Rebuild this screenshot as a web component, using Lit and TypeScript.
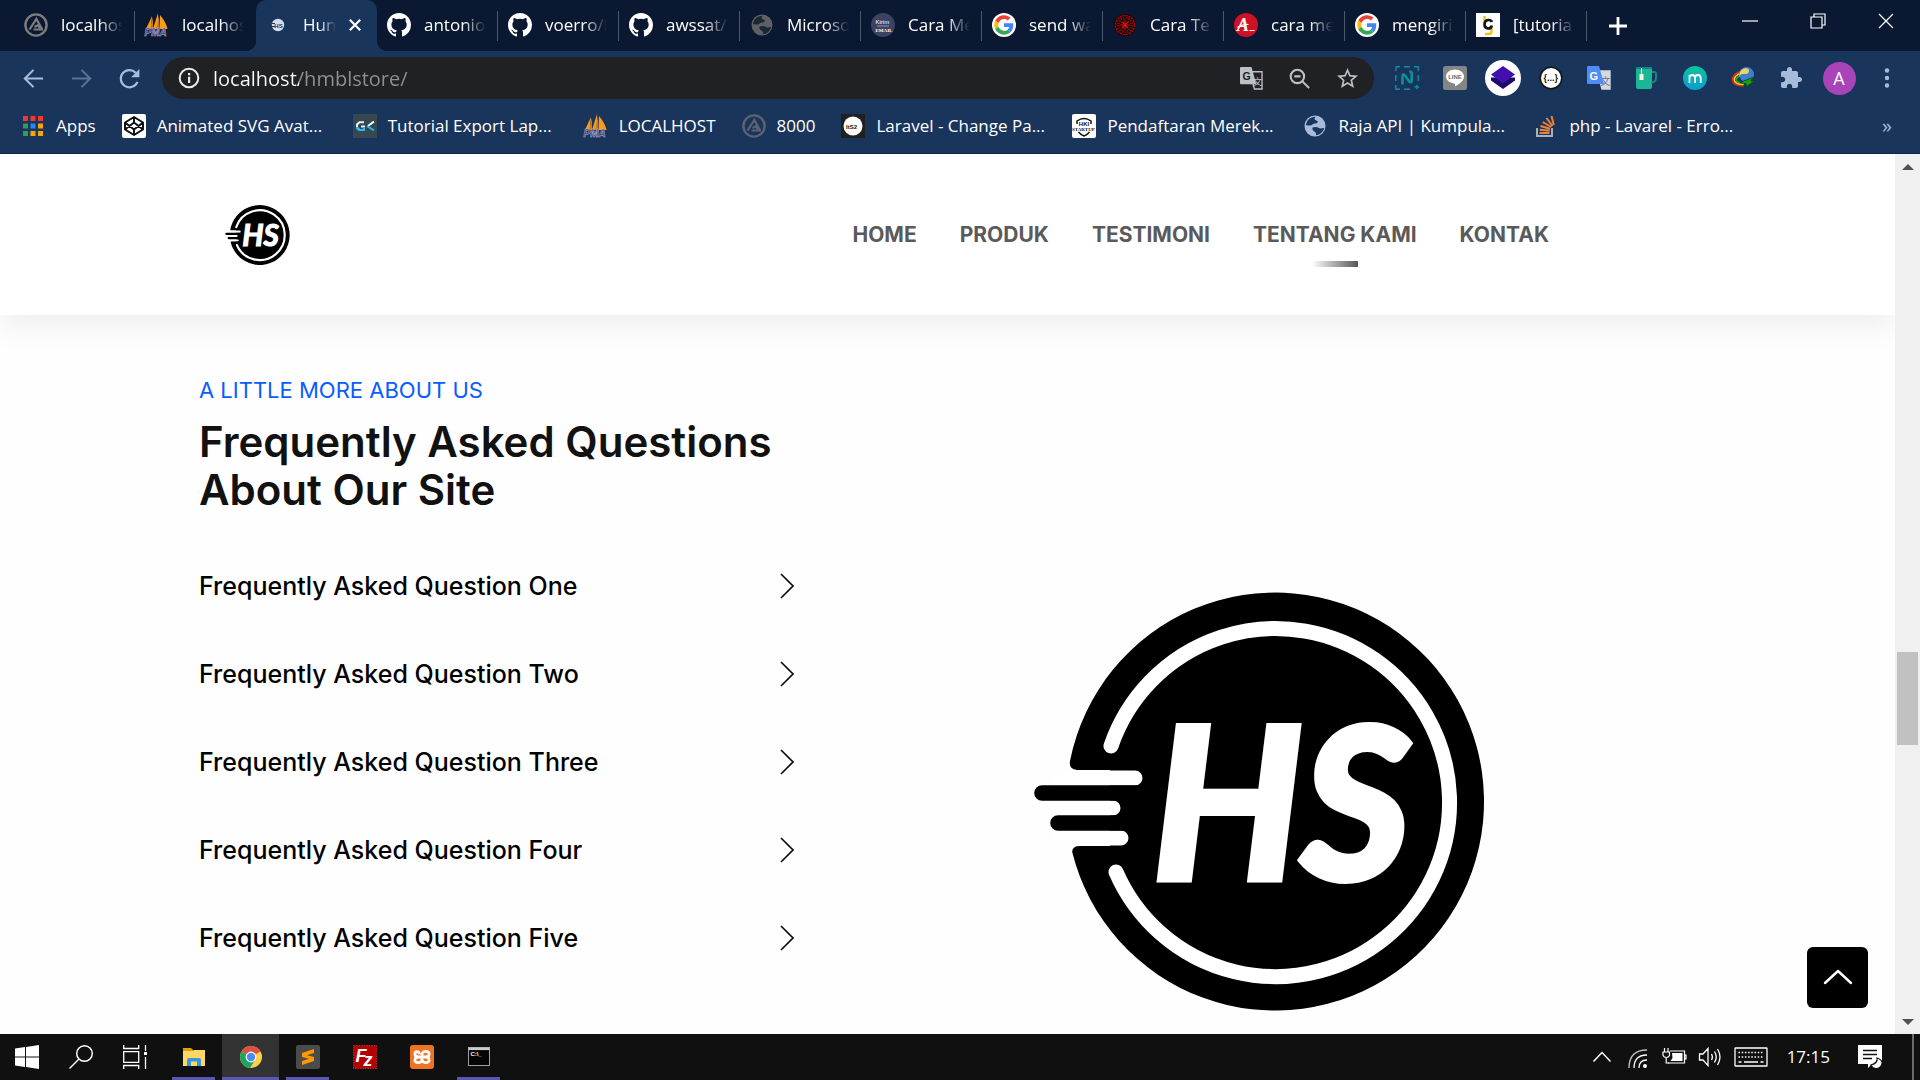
import { LitElement, html, css, svg } from "lit";
import { customElement, property, state } from "lit/decorators.js";
import { classMap } from "lit/directives/class-map.js";

/* ---------- shared drawings ---------- */

const brandLogo = () => html`<svg viewBox="34 32 451 419" role="img" aria-label="HS">
  <path d="M110 210H77Q68 209 70.2 200A209 209 0 1 1 72.2 292Q72 286 80 286H110Z" fill="#000" />
  <path d="M111 186A174 174 0 1 1 116 312" fill="none" stroke="#fff" stroke-width="15" stroke-linecap="round" />
  <g stroke-linecap="round" stroke-width="15" fill="none">
    <path d="M60 218H135M60 248H113M60 278H121" stroke="#fff" />
    <path d="M42 233H150M58 263H150" stroke="#000" stroke-width="15.6" />
  </g>
  <text x="153" y="318" class="mono">HS</text>
</svg>`;

const github = html`<svg viewBox="0 0 16 16"><path fill="#fff" d="M8 0C3.58 0 0 3.58 0 8c0 3.54 2.29 6.53 5.47 7.59.4.07.55-.17.55-.38 0-.19-.01-.82-.01-1.49-2.01.37-2.53-.49-2.69-.94-.09-.23-.48-.94-.82-1.13-.28-.15-.68-.52-.01-.53.63-.01 1.08.58 1.23.82.72 1.21 1.87.87 2.33.66.07-.52.28-.87.51-1.07-1.78-.2-3.64-.89-3.64-3.95 0-.87.31-1.59.82-2.15-.08-.2-.36-1.02.08-2.12 0 0 .67-.21 2.2.82a7.6 7.6 0 0 1 4 0c1.53-1.04 2.2-.82 2.2-.82.44 1.1.16 1.92.08 2.12.51.56.82 1.27.82 2.15 0 3.07-1.87 3.75-3.65 3.95.29.25.54.73.54 1.48 0 1.07-.01 1.93-.01 2.2 0 .21.15.46.55.38A8 8 0 0 0 16 8c0-4.42-3.58-8-8-8z"/></svg>`;

const google = html`<svg viewBox="0 0 48 48"><circle cx="24" cy="24" r="24" fill="#fff"/><g transform="translate(4.500 4.500) scale(.81)"><path fill="#EA4335" d="M24 9.5c3.54 0 6.71 1.22 9.21 3.6l6.85-6.85C35.9 2.38 30.47 0 24 0 14.62 0 6.51 5.38 2.56 13.22l7.98 6.19C12.43 13.72 17.74 9.5 24 9.5z"/><path fill="#4285F4" d="M46.98 24.55c0-1.57-.15-3.09-.38-4.55H24v9.02h12.94c-.58 2.96-2.26 5.48-4.78 7.18l7.73 6c4.51-4.18 7.09-10.36 7.09-17.65z"/><path fill="#FBBC05" d="M10.53 28.59c-.48-1.45-.76-2.99-.76-4.59s.27-3.14.76-4.59l-7.98-6.19C.92 16.46 0 20.12 0 24c0 3.88.92 7.54 2.56 10.78l7.97-6.19z"/><path fill="#34A853" d="M24 48c6.48 0 11.93-2.13 15.89-5.81l-7.73-6c-2.15 1.45-4.92 2.3-8.16 2.3-6.26 0-11.57-4.22-13.47-9.91l-7.98 6.19C6.51 42.62 14.62 48 24 48z"/></g></svg>`;

const ampps = (c: string) => html`<svg viewBox="0 0 24 24" fill="none" stroke=${c}><circle cx="12" cy="12" r="10.6" stroke-width="2.4"/><path d="M5.5 16.5L12.4 6l5.8 10.5M9.5 16.5h9.5M10.5 14l3.4-1.8 2 3" stroke-width="2.2"/></svg>`;

const pma = html`<svg viewBox="0 0 24 24"><path fill="#f89c1c" d="M1 16L7 3l-1 13zM8 16L13 0l0 16zM14.500 16L15 2q6 7 7.500 14z"/><path fill="#c9781a" d="M5 16L8 4v12zM11 16l3-14v14z"/><text x="-.5" y="23" class="pma">PMA</text></svg>`;

const globe = (c: string, land: string) => html`<svg viewBox="0 0 24 24"><circle cx="12" cy="12" r="10.500" fill=${c}/><path fill=${land} d="M12.500 2.800c-1 1.200-1.300 2.400-.3 3.200 1.300.8 2.700.6 2.500 2-.2 1.300-2 1.400-3.400 1.600-1.800.3-1.800 1.900-4.300 1.900L3 11.300c.4-4.600 4-8.300 9.500-8.500zM9.500 13.500c2.500-1 4.500-.7 6 .3 1 .8 2.200.8 3.500.4.900-.2 1.500-.1 2 .1-1 4-4.500 6.800-8.300 7 .8-1.500.4-2.500-.6-3.300-1.700-1.100-3.200-2.300-2.600-4.500z"/></svg>`;

const translate = (a: string, b: string) => html`<svg viewBox="0 0 24 24"><path d="M10 5h13v18H15z" fill=${b === "none" ? "#202124" : b} stroke=${b === "none" ? "#bdc1c6" : b} stroke-width="1.400"/><text x="13.200" y="19" class="han" fill=${b === "none" ? "#bdc1c6" : "#607890"}>文</text><path d="M1 0h11l5 18H1a1 1 0 0 1-1-1V1a1 1 0 0 1 1-1z" fill=${a}/><text x="2.500" y="13.500" class="gee" fill=${b === "none" ? "#202124" : "#fff"}>G</text></svg>`;

const icons: Record<string, unknown> = {
  ampps: ampps("#7d7d7d"),
  amppsDim: ampps("#5c6270"),
  pma,
  github,
  google,
  hs: html`<svg viewBox="0 0 24 24"><circle cx="12" cy="12" r="6.200" fill="#d7dce8"/><path d="M6 10.500h3M6 13.500h3" stroke="#1a355b"/><text x="8.300" y="14.600" class="tiny" fill="#1a355b">HS</text></svg>`,
  globeDim: globe("#5e6064", "#1b2637"),
  globe: globe("#a8bbdb", "#1a355b"),
  kirim: html`<svg viewBox="0 0 24 24"><circle cx="12" cy="12" r="12" fill="#3b4263"/><text x="4.500" y="11" class="tiny light" fill="#fff">Kirim</text><path d="M6 13h12" stroke="#aab" stroke-width=".8"/><text x="4.500" y="19" class="micro" fill="#fff">EMAIL</text></svg>`,
  redseal: html`<svg viewBox="0 0 24 24"><circle cx="12" cy="12" r="11" fill="#100608"/><g fill="none" stroke="#a5080e"><circle cx="12" cy="12" r="9.500" stroke-dasharray="2.200 .8" stroke-width="1.600"/><circle cx="12" cy="12" r="6.800" stroke-dasharray="1 1.500" stroke-width="3"/></g><path d="M12 7v10M7 12h10M8.500 8.500l7 7M15.500 8.500l-7 7" stroke="#e00a12" stroke-width="1.200"/></svg>`,
  alfa: html`<svg viewBox="0 0 24 24"><circle cx="12" cy="12" r="12" fill="#cf1126"/><text x="3" y="18" class="alfa" fill="#fff">A</text><path d="M3.500 14.500q5-3.500 11-3M15.500 17.500h5" stroke="#fff" stroke-width="1.200" fill="none"/></svg>`,
  cg: html`<svg viewBox="0 0 24 24"><path fill="#fff" d="M0 0h24v24H0z"/><path d="M8.500 3v5M15.500 15.500V19q0 2-2.500 2H9" stroke="#f2c21c" stroke-width="2.400" fill="none"/><path d="M16 9q-1-2.300-4-2-3.500.4-3.500 4.300t3.500 4.200q3.500 0 3.800-3" stroke="#141414" stroke-width="2.600" fill="none"/></svg>`,
  apps: html`<svg viewBox="0 0 24 24">${[["#f4362e", "#f4362e", "#f4362e"], ["#2f9e56", "#2b87f0", "#f2a60c"], ["#2f9e56", "#f2a60c", "#f2a60c"]].map((r, y) => r.map((c, x) => svg`<rect x=${2 + x * 7.5} y=${2 + y * 7.5} width="5" height="5" fill=${c}/>`))}</svg>`,
  codepen: html`<svg viewBox="0 0 24 24"><rect width="24" height="24" rx="2" fill="#fff"/><path d="M12 3l9 5.500v7L12 21l-9-5.500v-7zM12 3v5.500M12 21v-5.500M3 8.500l9 7 9-7M3 15.500l9-7 9 7" fill="none" stroke="#0b0b12" stroke-width="1.900" stroke-linejoin="round"/></svg>`,
  gk: html`<svg viewBox="0 0 24 24"><path fill="#36474f" d="M0 0h24v24H0z"/><path d="M11 8.300H6.500L4 10.500v3L6.500 16H11v-3.500H8" fill="none" stroke="#e8f5fb" stroke-width="2"/><path d="M4 13v1l2.500 2H11v-3" fill="none" stroke="#29b6f6" stroke-width="2"/><path d="M21 7.500l-6 4.500" stroke="#fff" stroke-width="2"/><path d="M14 12l7 4.500" stroke="#29b6f6" stroke-width="2"/></svg>`,
  its2: html`<svg viewBox="0 0 24 24"><path fill="#202020" d="M0 0h24v24H0z"/><circle cx="12" cy="12" r="9.500" fill="#fff"/><text x="5" y="14.500" class="tiny" fill="#111">ItS2</text></svg>`,
  hki: html`<svg viewBox="0 0 24 24"><rect width="24" height="24" rx="2" fill="#fff"/><path d="M5 10V7q7-5 14 0v3M6.500 18q2.500 3 5.500 4 3-1 5.500-4" fill="none" stroke="#111" stroke-width="1.500"/><text x="6.800" y="11.500" class="tiny" fill="#111">HKI</text><text x="0" y="16.500" class="micro" fill="#111">STARTUP</text></svg>`,
  stack: html`<svg viewBox="0 0 24 24" fill="none"><path d="M3 14v8h15v-8" stroke="#a9b0ba" stroke-width="2"/><path d="M5.500 19h10M5.700 15.800l10 1M6.500 12l9.500 2.800M8.700 8l8.600 5M12.500 4l6 8M17.500 2l2.300 9" stroke="#ef8236" stroke-width="2"/></svg>`,

  back: html`<svg viewBox="0 0 24 24" fill="none" stroke="#a8bbdb" stroke-width="2.200"><path d="M22 12H3.500M12 3l-9 9 9 9"/></svg>`,
  forward: html`<svg viewBox="0 0 24 24" fill="none" stroke="#59709a" stroke-width="2.200"><path d="M2 12h18.500M12 3l9 9-9 9"/></svg>`,
  reload: html`<svg viewBox="0 0 24 24"><path d="M20.300 15.500A9 9 0 1 1 18.500 6" fill="none" stroke="#a8bbdb" stroke-width="2.300"/><path d="M22.300 2v8.600h-8.600z" fill="#a8bbdb"/></svg>`,
  info: html`<svg viewBox="0 0 24 24"><circle cx="12" cy="12" r="9.300" fill="none" stroke="#e8eaed" stroke-width="2"/><path d="M11 10.800h2.200V17H11zM11 7h2.200v2.200H11z" fill="#e8eaed"/></svg>`,
  translateGray: translate("#bdc1c6", "none"),
  zoomOut: html`<svg viewBox="0 0 24 24" fill="none" stroke="#bdc1c6" stroke-width="2.200"><circle cx="9.800" cy="9.800" r="7"/><path d="M15 15l7 7M6.500 9.800h6.600"/></svg>`,
  star: html`<svg viewBox="1 1 22 22"><path fill="#bdc1c6" d="M22 9.240l-7.190-.62L12 2 9.190 8.630 2 9.240l5.460 4.730L5.820 21 12 17.270 18.180 21l-1.630-7.030L22 9.240zM12 15.400l-3.760 2.270 1-4.280-3.320-2.880 4.380-.38L12 6.100l1.710 4.040 4.380.38-3.320 2.880 1 4.280L12 15.400z"/></svg>`,

  nimbus: html`<svg viewBox="0 0 24 24" fill="none" stroke="#0d8f9c"><path d="M5 .8H1M1 .5V5M9 .8h6M19 .8h4.200V5M23.200 9v6M.8 9v6M.8 19v4.200H5M9 23.200h6M19.500 21h4.500M21.800 18.800v4.500" stroke-width="1.400"/><path d="M7.500 18.500v-8q0-3 2.300-1.300l4.600 6.500q2.300 1.600 2.300-1.200V7.500q0-2-2.500-2" stroke-width="2.600"/></svg>`,
  line: html`<svg viewBox="0 0 24 24"><rect width="24" height="24" rx="2.500" fill="#858585"/><path d="M12 3.500c5 0 9 3.100 9 7 0 4.200-4.800 7.800-9 10 .3-2 .2-3-1-3.100-4.500-.6-8-3.300-8-6.900 0-3.900 4-7 9-7z" fill="#fff"/><text x="5.200" y="12.800" class="tiny" fill="#6b6b6b">LINE</text></svg>`,
  layers: html`<svg viewBox="0 0 36 36"><circle cx="18" cy="18" r="18" fill="#fff"/><path d="M6 20.500L18 29l12-8.500v-3H6z" fill="#1c0c66"/><path d="M18 6l12 8.500L18 23.500 6 14.500z" fill="#4310ae"/></svg>`,
  json: html`<svg viewBox="0 0 24 24"><circle cx="12" cy="12" r="10.800" fill="#fff" stroke="#161616" stroke-width="1.600"/><text x="4.500" y="15" class="json" fill="#111">{...}</text></svg>`,
  translateBlue: translate("#4f8df5", "#d5d9dd"),
  cup: html`<svg viewBox="0 0 24 24"><path d="M1 1h16v20q0 2-2 2H3q-2 0-2-2z" fill="#1cb596"/><path d="M1 1h16v2H1z" fill="#128a77"/><path d="M17 6h2.500Q21 6 21 8v4q0 4-4.500 4.500" fill="none" stroke="#128a77" stroke-width="2"/><path d="M6.500 2v6" stroke="#e8fff5"/><path d="M4.500 8h4v6h-4z" fill="#f5f8d8"/></svg>`,
  moz: html`<svg viewBox="0 0 24 24"><defs><linearGradient id="mg" x2="0" y2="1"><stop stop-color="#0fc29a"/><stop offset="1" stop-color="#079fd0"/></linearGradient></defs><circle cx="12" cy="12" r="12" fill="url(#mg)"/><path d="M6.500 17v-8M6.500 12q0-3 2.800-3t2.800 3v5M12.100 12q0-3 2.800-3t2.800 3v5" stroke="#fff" stroke-width="1.800" fill="none"/></svg>`,
  idm: html`<svg viewBox="0 0 24 24"><g fill="none" stroke-width="1.700"><path d="M11 5Q1 8 1.500 14t11 6" stroke="#e0271c"/><path d="M11 6.800Q3 9.500 3.300 14t9.500 4.500" stroke="#f5c61a"/><path d="M11 8.500Q5 11 5.300 14t8 3" stroke="#1ea53a"/></g><circle cx="15.500" cy="8.500" r="7.500" fill="#3d7fd0"/><path d="M13 2.500q5-1 5 2.500t-5 3-4.300 3.500Q7 5 13 2.500z" fill="#e6d66a"/><path d="M9 16.500l12.500-5-1.500 3.500h3.500L15 21l.5-3z" fill="#1e9a1a" stroke="#06490a" stroke-width=".8"/></svg>`,
  puzzle: html`<svg viewBox="0 0 24 24"><path fill="#a8bbdb" d="M20.500 11H19V7c0-1.100-.9-2-2-2h-4V3.500C13 2.120 11.880 1 10.500 1S8 2.120 8 3.500V5H4c-1.100 0-1.990.9-1.990 2v3.800H3.500c1.490 0 2.700 1.210 2.700 2.700s-1.210 2.700-2.700 2.700H2V20c0 1.100.9 2 2 2h3.800v-1.500c0-1.490 1.210-2.700 2.700-2.700 1.490 0 2.700 1.210 2.700 2.700V22H17c1.100 0 2-.9 2-2v-4h1.500c1.380 0 2.500-1.120 2.500-2.500S21.880 11 20.500 11z"/></svg>`,
  menu: html`<svg viewBox="0 0 24 24" fill="#a8bbdb"><circle cx="12" cy="4.500" r="2.200"/><circle cx="12" cy="12" r="2.200"/><circle cx="12" cy="19.500" r="2.200"/></svg>`,
  plus: html`<svg viewBox="0 0 24 24"><path d="M12 3v18M3 12h18" stroke="#fff" stroke-width="2.800"/></svg>`,
  close: html`<svg viewBox="0 0 12 12"><path d="M.8.8l10.400 10.400M11.200.8L.8 11.200" stroke="#fff" stroke-width="2.200"/></svg>`,

  windows: html`<svg viewBox="0 0 24 24" fill="#fff"><path d="M0 3.400l10-1.400v9.500H0zM11 1.900L24 0v11.500H11zM0 12.500h10V22L0 20.600zM11 12.500h13V24l-13-1.900z"/></svg>`,
  search: html`<svg viewBox="0 0 24 24" fill="none" stroke="#fff" stroke-width="1.500"><circle cx="15.500" cy="8.500" r="7.800"/><path d="M10 14L.5 23.500"/></svg>`,
  taskview: html`<svg viewBox="0 0 24 24" fill="none" stroke="#fff" stroke-width="1.300"><path d="M.7 0v3.500h15V0M.7 24v-3.500h15V24M.7 6.700h15v10.600H.7zM22.500 0v6M22.500 12v12"/><path d="M21 7h3v3h-3z" fill="#fff" stroke="none"/></svg>`,
  explorer: html`<svg viewBox="0 0 24 24"><path d="M1 3h8l2 2v4H1z" fill="#e0a00d"/><path d="M1 6h9l2-1h11v16H1z" fill="#ffd767"/><path d="M5 21v-6q0-2 2-2h10q2 0 2 2v6h-4v-4.500H9V21z" fill="#3a96dd"/></svg>`,
  chrome: html`<svg viewBox="0 0 24 24"><circle cx="12" cy="12" r="11" fill="#fdd04a"/><path d="M12 12L2.500 6.500A11 11 0 0 1 21.500 6.500z" fill="#dd5144"/><path d="M12 1a11 11 0 0 1 9.500 5.500H12z" fill="#dd5144"/><path d="M2.500 6.500A11 11 0 0 0 11 23l5.300-8.500L12 12z" fill="#1da362"/><circle cx="12" cy="12" r="5.400" fill="#fff"/><circle cx="12" cy="12" r="4.200" fill="#4c8bf5"/></svg>`,
  sublime: html`<svg viewBox="0 0 24 24"><rect width="24" height="24" rx="2" fill="#4b4b4b"/><path d="M6 8l12-4v4l-7 2.200L18 12v4L6 20v-4l7-2.200L6 12z" fill="#ff9800"/></svg>`,
  filezilla: html`<svg viewBox="0 0 24 24"><rect x=".7" y=".7" width="22.600" height="22.600" fill="#b30000" stroke="#d02020" stroke-width="1.200" stroke-dasharray="1.500 1"/><text x="2.500" y="17" class="fz" fill="#fff">F</text><text x="10.500" y="21" class="fz" fill="#fff">z</text></svg>`,
  xampp: html`<svg viewBox="0 0 24 24"><rect width="24" height="24" rx="3" fill="#ee7423"/><path d="M9.500 9.300Q9 6.300 6.800 6.600 4.600 7 5 9.500 5.300 12 8.500 12H15.500Q18.700 12 19 9.500 19.400 7 17 6.500 12.500 5.800 12 9.500V14.500Q11.500 18.200 7 17.500 4.600 17 5 14.500 5.300 12 8.500 12M15.500 12Q18.700 12 19 14.500 19.400 17 17 17.500 12.500 18.200 12 14.500" fill="none" stroke="#fff" stroke-width="2.800" stroke-linejoin="round"/></svg>`,
  cmd: html`<svg viewBox="0 0 24 24"><rect x="1.500" y="2.500" width="21" height="18" fill="#050505" stroke="#9aa0a4"/><path d="M1.500 2.500h21v2.600h-21z" fill="#c8cccf"/><text x="3.500" y="11" class="tiny" fill="#fff">C:\\_</text></svg>`,

  up: html`<svg viewBox="0 0 24 24" fill="none" stroke="#fff" stroke-width="1.500"><path d="M3.500 16.500l8.500-9 8.500 9"/></svg>`,
  wifi: html`<svg viewBox="0 0 24 24" fill="none" stroke="#fff" stroke-width="1.300"><path d="M3 23Q3 5 21 5" opacity=".75"/><path d="M8 23q0-13 13-13"/><path d="M13 23q0-8 8-8"/><circle cx="19" cy="21" r="2" fill="#fff" stroke="none"/></svg>`,
  battery: html`<svg viewBox="0 0 24 24" fill="none" stroke="#fff" stroke-width="1.200"><path d="M8 6h14.500v12H6M22.500 10h1.500v4h-1.500"/><path d="M10 8h10.500v8H8.500l2-3z" fill="#fff" stroke="none"/><path d="M2.500 3v4M6 3v4M1 7h6.500v3.500q-1 2-3.200 2T1 10.500zM4.200 12.500V18h3"/></svg>`,
  volume: html`<svg viewBox="0 0 24 24" fill="none" stroke="#fff" stroke-width="1.300"><path d="M1.500 9H5l5-5.500v17L5 15H1.500zM13.500 9q1.800 3 0 6M16.500 6.500q3.500 5.500 0 11M19.500 4q5 8 0 16"/></svg>`,
  keyboard: html`<svg viewBox="0 0 34 24" fill="none" stroke="#fff" stroke-width="1.300"><rect x="1" y="3" width="32" height="18" rx=".6"/><path d="M4.500 7.500h25M4.500 12h25" stroke-dasharray="1.500 1.700"/><path d="M4.500 17h3M10 17h14M26.500 17h3"/></svg>`,
  notice: html`<svg viewBox="0 0 24 24"><path d="M0 0h24v19h-10l-4 4v-4H0z" fill="#fff"/><path d="M5 5.500h14M5 9.500h14M5 13.500h9" stroke="#111" stroke-width="1.300"/><path d="M19 13q1 5-6 7 2 4 6 3.500t5-4.500-5-6z" fill="#fff" stroke="#111" stroke-width="1.200"/></svg>`,
};

const tabs: [string, string][] = [
  ["ampps", "localhos"], ["pma", "localhos"], ["hs", "Hun"], ["github", "antonio"],
  ["github", "voerro/l"], ["github", "awssat/l"], ["globeDim", "Microso"], ["kirim", "Cara Me"],
  ["google", "send wa"], ["redseal", "Cara Te"], ["alfa", "cara me"], ["google", "mengiri"],
  ["cg", "[tutoria"],
];

const bookmarks: [string, string, boolean][] = [
  ["apps", "Apps", false], ["codepen", "Animated SVG Avat...", true], ["gk", "Tutorial Export Lap...", true],
  ["pma", "LOCALHOST", false], ["amppsDim", "8000", false], ["its2", "Laravel - Change Pa...", true],
  ["hki", "Pendaftaran Merek...", true], ["globe", "Raja API | Kumpula...", true], ["stack", "php - Lavarel - Erro...", true],
];

const extensions: [string, string][] = [
  ["nimbus", "Nimbus"], ["line", "LINE"], ["layers", "Layers"], ["json", "JSON viewer"],
  ["translateBlue", "Translate"], ["cup", "Cup"], ["moz", "Moz"], ["idm", "Download manager"], ["puzzle", "Extensions"],
];

const iconStyles = css`
  * { box-sizing: border-box; }
  svg { display: block; width: 24px; height: 24px; flex: none; overflow: visible; }
  button { border: 0; padding: 0; background: none; color: inherit; font: inherit; display: grid; place-items: center; cursor: pointer; }
  a { color: inherit; text-decoration: none; }
  .tiny { font: 700 6px "Liberation Sans", sans-serif; }
  .light { font-weight: 400; }
  .micro { font: 700 5px "Liberation Serif", serif; }
  .pma { font: italic 700 10px "Liberation Sans", sans-serif; fill: #38346b; stroke: #b9b9d6; stroke-width: .5px; }
  .han { font: 10px "Noto Sans CJK SC", sans-serif; }
  .gee { font: 700 11px "Liberation Sans", sans-serif; }
  .alfa { font: italic 700 18px "Liberation Serif", serif; }
  .json { font: 700 9px "Liberation Sans", sans-serif; }
  .fz { font: italic 700 18px "Liberation Sans", sans-serif; }
`;

/* ---------- browser chrome ---------- */

@customElement("browser-bar")
class BrowserBar extends LitElement {
  static styles = [iconStyles, css`
    :host { display: block; flex: none; background: #1a355b; color: #fff; font: 17px/24px "Open Sans", sans-serif; border-bottom: 1px solid #10233f; }
    .strip { display: flex; height: 51px; background: #0a1931; padding-left: 14px; }
    .tab { flex: 0 1 121px; min-width: 0; display: flex; align-items: center; gap: 13px; padding: 0 10px 2px; position: relative; }
    .tab::after { content: ""; position: absolute; right: 0; top: 11px; width: 1px; height: 30px; background: #4b586c; }
    .tab.active::after, .tab.before::after { display: none; }
    .title { flex: 1; min-width: 0; overflow: hidden; white-space: nowrap; -webkit-mask-image: linear-gradient(90deg, #000 60%, transparent 62px); mask-image: linear-gradient(90deg, #000 60%, transparent 62px); }
    .active { background: #1a355b; border-radius: 10px 10px 0 0; z-index: 1; padding-right: 16px; }
    .active .title { -webkit-mask-image: linear-gradient(90deg, #000 50%, transparent); mask-image: linear-gradient(90deg, #000 50%, transparent); }
    .active::before { content: ""; position: absolute; bottom: 0; left: -10px; right: -10px; height: 10px; background: radial-gradient(circle at 0 0, transparent 10px, #1a355b 10px) left / 10px 10px no-repeat, radial-gradient(circle at 100% 0, transparent 10px, #1a355b 10px) right / 10px 10px no-repeat; }
    .close svg { width: 12px; height: 12px; }
    .add { width: 62px; }
    .window { display: flex; margin-left: auto; }
    .window button { width: 68px; height: 42px; }
    .window svg { width: 16px; height: 16px; fill: none; stroke: #fff; stroke-width: 1.2px; }
    .tools { display: flex; align-items: center; padding: 6px 9px 5px; gap: 9px; }
    .group { display: flex; align-items: center; }
    .group button { width: 48px; height: 42px; }
    .slim svg { width: 23px; height: 23px; }
    .wide svg { width: 36px; height: 36px; }
    .omni { flex: 1; min-width: 0; display: flex; align-items: center; height: 42px; border-radius: 21px; background: #202124; padding: 0 3px 0 15px; gap: 12px; }
    .omni > button { width: 24px; }
    .url { flex: 1; min-width: 0; border: 0; outline: 0; padding: 0; height: 32px; font: 20px/30px "Open Sans", sans-serif; color: transparent; caret-color: #fff; background: linear-gradient(90deg, #fff 86px, #8e9195 86px); -webkit-background-clip: text; background-clip: text; }
    .avatar { width: 33px; height: 33px; border-radius: 50%; background: #a944b8; font-size: 18px; display: grid; place-items: center; }
    .marks { display: flex; align-items: center; gap: 26px; height: 49px; padding: 0 28px 6px 21px; }
    .mark { display: flex; align-items: center; gap: 11px; white-space: nowrap; }
    .long { width: 170px; }
    .more { margin-left: auto; color: #a8bbdb; font-size: 20px; }
  `];

  render() {
    return html`
      <nav class="strip" aria-label="Tabs">
        ${tabs.map(([icon, title], i) => html`<div class=${classMap({ tab: true, active: i === 2, before: i === 1 })}>
          ${icons[icon]}<span class="title">${title}</span>
          ${i === 2 ? html`<button class="close" aria-label="Close tab">${icons.close}</button>` : ""}
        </div>`)}
        <button class="add" aria-label="New tab">${icons.plus}</button>
        <div class="window">
          <button aria-label="Minimise"><svg viewBox="0 0 16 16"><path d="M0 8h16"/></svg></button>
          <button aria-label="Restore"><svg viewBox="0 0 16 16"><path d="M1 4h11v11H1zM4 4V1h11v11h-3"/></svg></button>
          <button aria-label="Close"><svg viewBox="0 0 16 16"><path d="M1 1l14 14M15 1L1 15"/></svg></button>
        </div>
      </nav>
      <div class="tools">
        <div class="group slim">
          <button aria-label="Back">${icons.back}</button>
          <button aria-label="Forward">${icons.forward}</button>
          <button aria-label="Reload">${icons.reload}</button>
        </div>
        <div class="omni">
          <button aria-label="Site information">${icons.info}</button>
          <input class="url" aria-label="Address" value="localhost/hmblstore/" />
          <div class="group slim">
            <button aria-label="Translate page">${icons.translateGray}</button>
            <button aria-label="Zoom">${icons.zoomOut}</button>
            <button aria-label="Bookmark">${icons.star}</button>
          </div>
        </div>
        <div class="group">
          ${extensions.map(([icon, name]) => html`<button class=${classMap({ wide: icon === "layers" })} aria-label=${name}>${icons[icon]}</button>`)}
          <button aria-label="Profile"><span class="avatar">A</span></button>
          <button aria-label="Menu">${icons.menu}</button>
        </div>
      </div>
      <nav class="marks" aria-label="Bookmarks">
        ${bookmarks.map(([icon, text, long]) => html`<a class="mark" href="#">${icons[icon]}<span class=${classMap({ long })}>${text}</span></a>`)}
        <button class="more" aria-label="More bookmarks">»</button>
      </nav>`;
  }
}

/* ---------- web page ---------- */

@customElement("store-page")
class StorePage extends LitElement {
  @state() private open = -1;

  static styles = [iconStyles, css`
    :host { display: flex; flex: 1; min-height: 0; background: #fefefe; color: #000; font-family: Inter, sans-serif; }
    .page { flex: 1; min-width: 0; position: relative; display: flex; flex-direction: column; overflow: hidden; }
    .inner { width: 100%; max-width: 1497px; margin: 0 auto; }
    header { background: #fff; box-shadow: 0 10px 30px rgba(0, 0, 0, .07); }
    .bar { display: flex; align-items: center; justify-content: space-between; height: 161px; padding: 0 147px 0 26px; }
    .brand svg { width: 65px; height: 60px; }
    .mono { font: italic 700 208px Lato, sans-serif; fill: #fff; stroke: #fff; stroke-width: 8px; }
    .menu { display: flex; gap: 43px; font-weight: 700; font-size: 21px; line-height: 30px; color: #5a5a5a; }
    .menu a { position: relative; white-space: nowrap; }
    .current::after { content: ""; position: absolute; left: 50%; top: 41px; width: 46px; height: 6px; margin-left: -23px; background: linear-gradient(90deg, #fff, #555); }
    .content { flex: 1; display: grid; grid-template-columns: 2fr 3fr; }
    .faq { padding-top: 57px; }
    .eyebrow { margin: 0; color: #0a5cff; font-size: 22px; line-height: 36px; }
    h2 { margin: 10px 0 28px; font-weight: 600; font-size: 42px; line-height: 48px; color: #111; }
    ul { margin: 0; padding: 0; list-style: none; }
    .question { display: flex; justify-content: space-between; align-items: center; width: 100%; height: 88px; padding-right: 4px; font-size: 25px; font-weight: 500; }
    .question svg { width: 14px; height: 26px; fill: none; stroke: #000; stroke-width: 1.6px; }
    .art { align-self: end; padding: 0 0 23px 26px; display: grid; justify-items: center; }
    .art svg { width: 451px; height: auto; max-width: 100%; }
    .top { position: absolute; right: 27px; bottom: 26px; width: 61px; height: 61px; border-radius: 6px; background: #000; }
    .top svg { width: 30px; height: 20px; fill: none; stroke: #fff; stroke-width: 2.4px; }
    .scroll { flex: none; width: 25px; background: #f0f0f0; display: grid; grid-template-rows: 25px 474fr 93px 264fr 25px; justify-items: center; align-items: center; }
    .scroll svg { width: 12px; height: 6px; fill: #505050; }
    .thumb { grid-row: 3; width: 21px; height: 100%; background: #c1c1c1; }
    .down { grid-row: 5; }
  `];

  render() {
    return html`
      <div class="page">
        <header><div class="inner bar">
          <a class="brand" href="#">${brandLogo()}</a>
          <nav class="menu">
            ${["HOME", "PRODUK", "TESTIMONI", "TENTANG KAMI", "KONTAK"].map((t) => html`<a href="#" class=${classMap({ current: t === "TENTANG KAMI" })}>${t}</a>`)}
          </nav>
        </div></header>
        <main class="inner content">
          <section class="faq">
            <p class="eyebrow">A LITTLE MORE ABOUT US</p>
            <h2>Frequently Asked Questions<br />About Our Site</h2>
            <ul>
              ${["One", "Two", "Three", "Four", "Five"].map((n, i) => html`<li>
                <button class="question" aria-expanded=${this.open === i ? "true" : "false"} @click=${() => (this.open = this.open === i ? -1 : i)}>
                  Frequently Asked Question ${n}
                  <svg viewBox="0 0 14 26"><path d="M1 1l12 12L1 25"/></svg>
                </button></li>`)}
            </ul>
          </section>
          <div class="art">${brandLogo()}</div>
        </main>
        <button class="top" aria-label="Back to top"><svg viewBox="0 0 30 20"><path d="M2 15L15 3l13 12" stroke-linecap="round" stroke-linejoin="round"/></svg></button>
      </div>
      <div class="scroll">
        <svg viewBox="0 0 12 6"><path d="M0 6l6-6 6 6z"/></svg>
        <div class="thumb"></div>
        <svg class="down" viewBox="0 0 12 6"><path d="M0 0h12L6 6z"/></svg>
      </div>`;
  }
}

/* ---------- taskbar ---------- */

@customElement("task-bar")
class TaskBar extends LitElement {
  @property() time = "17:15";

  static styles = [iconStyles, css`
    :host { display: flex; flex: none; height: 46px; background: #101010; color: #fff; font: 17px/24px "Open Sans", sans-serif; }
    .system { display: flex; margin-right: 3px; }
    .system button { width: 54px; }
    .apps { display: flex; }
    .apps button { width: 57px; border-bottom: 3px solid transparent; padding-top: 3px; position: relative; }
    .apps .running::after { content: ""; position: absolute; left: 7px; right: 7px; bottom: -3px; height: 3px; background: #5a57b4; }
    .apps .focused { background: #333; background-clip: border-box; }
    .apps .focused::after { left: 0; right: 0; }
    .tray { display: flex; align-items: center; margin-left: auto; gap: 12px; }
    .tray .key svg { width: 34px; }
    time { margin-left: 7px; }
    .notice { padding: 0 12px 0 16px; }
    .peek { width: 8px; height: 46px; border-left: 2px solid #6a6a6a; margin-left: 6px; }
  `];

  render() {
    const apps: [string, string][] = [["explorer", "running"], ["chrome", "running focused"], ["sublime", "running"], ["filezilla", ""], ["xampp", ""], ["cmd", "running"]];
    return html`
      <div class="system">${["windows", "search", "taskview"].map((n) => html`<button aria-label=${n}>${icons[n]}</button>`)}</div>
      <div class="apps">${apps.map(([n, c]) => html`<button class=${c} aria-label=${n}>${icons[n]}</button>`)}</div>
      <div class="tray">
        ${["up", "wifi", "battery", "volume", "keyboard"].map((n) => html`<button class=${n === "keyboard" ? "key" : ""} aria-label=${n}>${icons[n]}</button>`)}
        <time>${this.time}</time>
        <button class="notice" aria-label="Notifications">${icons.notice}</button>
        <div class="peek"></div>
      </div>`;
  }
}

@customElement("app-root")
class AppRoot extends LitElement {
  static styles = css`:host { display: flex; flex-direction: column; height: 100vh; overflow: hidden; }`;
  render() {
    return html`<browser-bar></browser-bar><store-page></store-page><task-bar></task-bar>`;
  }
}
